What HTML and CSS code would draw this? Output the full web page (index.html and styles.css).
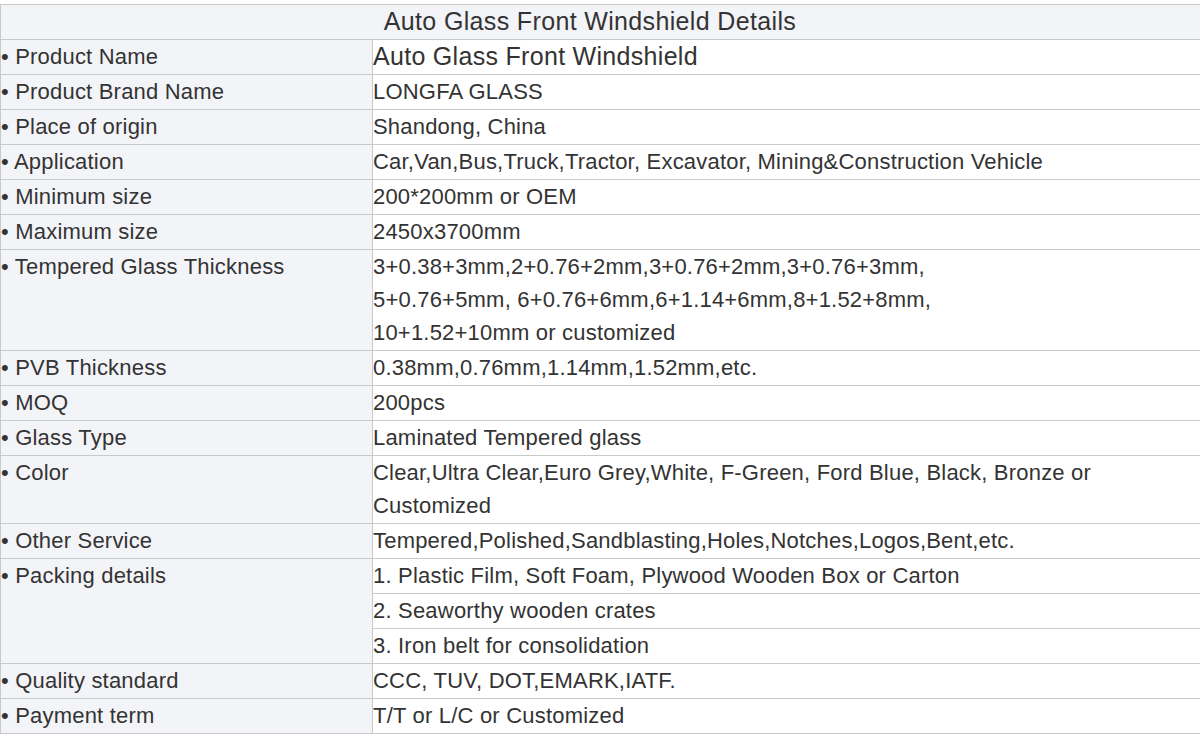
FILE: index.html
```html
<!DOCTYPE html>
<html>
<head>
<meta charset="utf-8">
<link rel="stylesheet" href="styles.css">
</head>
<body>
<table class="spec">
  <colgroup><col class="c-label"><col class="c-value"></colgroup>
  <tr><th colspan="2" class="title">Auto Glass Front Windshield Details</th></tr>
  <tr><td class="label">• Product Name</td><td class="value big">Auto Glass Front Windshield</td></tr>
  <tr><td class="label">• Product Brand Name</td><td class="value">LONGFA GLASS</td></tr>
  <tr><td class="label">• Place of origin</td><td class="value">Shandong, China</td></tr>
  <tr><td class="label">• Application</td><td class="value">Car,Van,Bus,Truck,Tractor, Excavator, Mining&amp;Construction Vehicle</td></tr>
  <tr><td class="label">• Minimum size</td><td class="value">200*200mm or OEM</td></tr>
  <tr><td class="label">• Maximum size</td><td class="value">2450x3700mm</td></tr>
  <tr><td class="label">• Tempered Glass Thickness</td><td class="value">3+0.38+3mm,2+0.76+2mm,3+0.76+2mm,3+0.76+3mm,<br>5+0.76+5mm, 6+0.76+6mm,6+1.14+6mm,8+1.52+8mm,<br>10+1.52+10mm or customized</td></tr>
  <tr><td class="label">• PVB Thickness</td><td class="value">0.38mm,0.76mm,1.14mm,1.52mm,etc.</td></tr>
  <tr><td class="label">• MOQ</td><td class="value">200pcs</td></tr>
  <tr><td class="label">• Glass Type</td><td class="value">Laminated Tempered glass</td></tr>
  <tr><td class="label">• Color</td><td class="value">Clear,Ultra Clear,Euro Grey,White, F-Green, Ford Blue, Black, Bronze or<br>Customized</td></tr>
  <tr><td class="label">• Other Service</td><td class="value">Tempered,Polished,Sandblasting,Holes,Notches,Logos,Bent,etc.</td></tr>
  <tr><td class="label" rowspan="3">• Packing details</td><td class="value">1. Plastic Film, Soft Foam, Plywood Wooden Box or Carton</td></tr>
  <tr><td class="value">2. Seaworthy wooden crates</td></tr>
  <tr><td class="value">3. Iron belt for consolidation</td></tr>
  <tr><td class="label">• Quality standard</td><td class="value">CCC, TUV, DOT,EMARK,IATF.</td></tr>
  <tr><td class="label">• Payment term</td><td class="value">T/T or L/C or Customized</td></tr>
</table>
</body>
</html>
```

FILE: styles.css
```css
html, body {
  margin: 0;
  padding: 0;
  background: #ffffff;
}
body {
  padding-top: 4px;
  overflow: hidden;
  font-family: "Liberation Sans", Arial, sans-serif;
  color: #333333;
}
.spec {
  border-collapse: collapse;
  width: 1210px;
  table-layout: fixed;
}
.c-label { width: 372px; }
.spec th,
.spec td {
  border: 1px solid #c9c9c9;
  padding: 0 0 1px 0;
  line-height: 33px;
  font-size: 22px;
  letter-spacing: 0.2px;
  font-weight: normal;
  text-align: left;
  vertical-align: top;
  white-space: nowrap;
}
.spec th.title {
  background: #f3f4f8;
  text-align: center;
  font-size: 25px;
  letter-spacing: 0.35px;
  padding-right: 30px;
}
.spec td.label {
  background: #f3f4f8;
  padding-left: 0;
}
.spec td.value {
  background: #ffffff;
}
.spec td.big {
  font-size: 25px;
  letter-spacing: 0.3px;
}
```
